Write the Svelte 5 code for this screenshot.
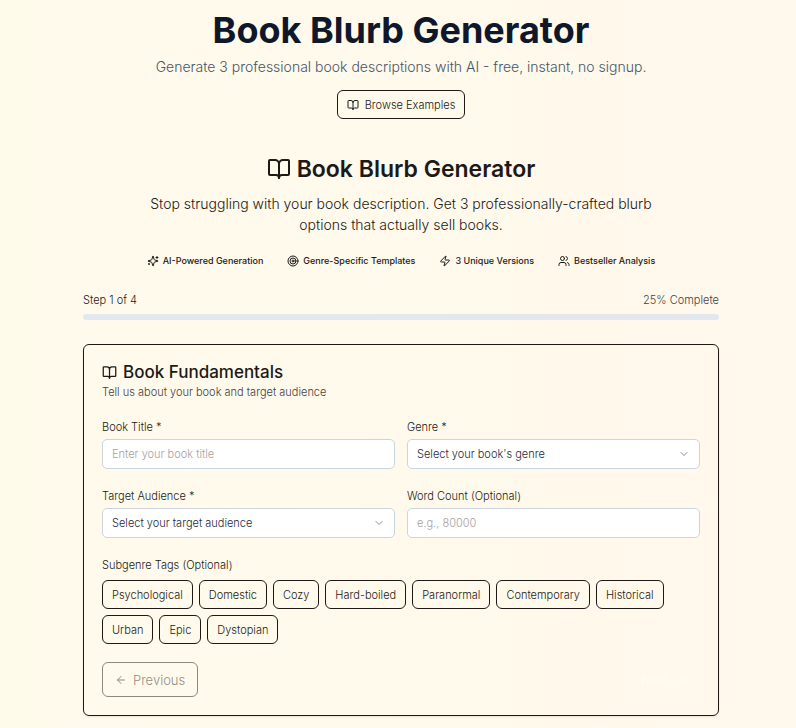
<script lang="ts">
    const features = [
        { icon: 'sparkles', label: 'AI-Powered Generation' },
        { icon: 'target', label: 'Genre-Specific Templates' },
        { icon: 'zap', label: '3 Unique Versions' },
        { icon: 'users', label: 'Bestseller Analysis' },
    ];

    const genres = ['Fantasy', 'Mystery', 'Romance', 'Science Fiction', 'Thriller'];
    const audiences = ['Middle Grade', 'Young Adult', 'New Adult', 'Adult'];
    const tags = [
        'Psychological',
        'Domestic',
        'Cozy',
        'Hard-boiled',
        'Paranormal',
        'Contemporary',
        'Historical',
        'Urban',
        'Epic',
        'Dystopian',
    ];

    let title = $state('');
    let genre = $state('');
    let audience = $state('');
    let wordCount = $state('');
    let selectedTags: string[] = $state([]);

    function toggleTag(tag: string) {
        selectedTags = selectedTags.includes(tag) ? selectedTags.filter((t) => t !== tag) : [...selectedTags, tag];
    }
</script>

{#snippet icon(name: string)}
    <svg class="icon icon-{name}" viewBox="0 0 24 24" aria-hidden="true">
        {#if name === 'book'}
            <path d="M12 7v14" />
            <path
                d="M3 18a1 1 0 0 1-1-1V4a1 1 0 0 1 1-1h5a4 4 0 0 1 4 4 4 4 0 0 1 4-4h5a1 1 0 0 1 1 1v13a1 1 0 0 1-1 1h-6a3 3 0 0 0-3 3 3 3 0 0 0-3-3z"
            />
        {:else if name === 'sparkles'}
            <path
                d="M9.937 15.5A2 2 0 0 0 8.5 14.063l-6.135-1.582a.5.5 0 0 1 0-.962L8.5 9.936A2 2 0 0 0 9.937 8.5l1.582-6.135a.5.5 0 0 1 .963 0L14.063 8.5A2 2 0 0 0 15.5 9.937l6.135 1.581a.5.5 0 0 1 0 .964L15.5 14.063a2 2 0 0 0-1.437 1.437l-1.582 6.135a.5.5 0 0 1-.963 0z"
            />
            <path d="M20 3v4M22 5h-4M4 17v2M5 18H3" />
        {:else if name === 'target'}
            <circle cx="12" cy="12" r="10" />
            <circle cx="12" cy="12" r="6" />
            <circle cx="12" cy="12" r="2" />
        {:else if name === 'zap'}
            <path
                d="M4 14a1 1 0 0 1-.78-1.63l9.9-10.2a.5.5 0 0 1 .86.46l-1.92 6.02A1 1 0 0 0 13 10h7a1 1 0 0 1 .78 1.63l-9.9 10.2a.5.5 0 0 1-.86-.46l1.92-6.02A1 1 0 0 0 11 14z"
            />
        {:else if name === 'users'}
            <path d="M16 21v-2a4 4 0 0 0-4-4H6a4 4 0 0 0-4 4v2" />
            <circle cx="9" cy="7" r="4" />
            <path d="M22 21v-2a4 4 0 0 0-3-3.87M16 3.13a4 4 0 0 1 0 7.75" />
        {:else if name === 'chevron'}
            <path d="m6 9 6 6 6-6" />
        {:else if name === 'left'}
            <path d="m12 19-7-7 7-7M19 12H5" />
        {:else if name === 'right'}
            <path d="M5 12h14M12 5l7 7-7 7" />
        {/if}
    </svg>
{/snippet}

<main class="page">
    <header class="hero">
        <h1>Book Blurb Generator</h1>
        <p>Generate 3 professional book descriptions with AI - free, instant, no signup.</p>
        <button type="button" class="button">{@render icon('book')}Browse Examples</button>
    </header>

    <section class="intro">
        <h2>{@render icon('book')}Book Blurb Generator</h2>
        <p>Stop struggling with your book description. Get 3 professionally-crafted blurb options that actually sell books.</p>
        <ul class="features">
            {#each features as feature}
                <li>{@render icon(feature.icon)}{feature.label}</li>
            {/each}
        </ul>
    </section>

    <section class="progress">
        <div class="progress-labels">
            <span>Step 1 of 4</span>
            <span class="progress-percent">25% Complete</span>
        </div>
        <div class="progress-track" role="progressbar" aria-label="Progress" aria-valuenow="25" aria-valuemin="0" aria-valuemax="100"></div>
    </section>

    <form class="card">
        <h3>{@render icon('book')}Book Fundamentals</h3>
        <p class="card-description">Tell us about your book and target audience</p>

        <div class="fields">
            <div class="field">
                <label for="title">Book Title *</label>
                <input id="title" type="text" placeholder="Enter your book title" bind:value={title} />
            </div>
            <div class="field">
                <label for="genre">Genre *</label>
                <div class="select">
                    <select id="genre" bind:value={genre}>
                        <option value="">Select your book's genre</option>
                        {#each genres as option}
                            <option value={option}>{option}</option>
                        {/each}
                    </select>
                    {@render icon('chevron')}
                </div>
            </div>
            <div class="field">
                <label for="audience">Target Audience *</label>
                <div class="select">
                    <select id="audience" bind:value={audience}>
                        <option value="">Select your target audience</option>
                        {#each audiences as option}
                            <option value={option}>{option}</option>
                        {/each}
                    </select>
                    {@render icon('chevron')}
                </div>
            </div>
            <div class="field">
                <label for="word-count">Word Count (Optional)</label>
                <input id="word-count" type="text" inputmode="numeric" placeholder="e.g., 80000" bind:value={wordCount} />
            </div>
        </div>

        <fieldset class="tags-group">
            <legend>Subgenre Tags (Optional)</legend>
            <div class="tags">
                {#each tags as tag}
                    <button
                        type="button"
                        class="button"
                        class:active={selectedTags.includes(tag)}
                        aria-pressed={selectedTags.includes(tag)}
                        onclick={() => toggleTag(tag)}>{tag}</button
                    >
                {/each}
            </div>
        </fieldset>

        <div class="actions">
            <button type="button" class="button large" disabled>{@render icon('left')}Previous</button>
            <button type="button" class="button large next">Next{@render icon('right')}</button>
        </div>
    </form>
</main>

<style>
    :global(body) {
        margin: 0;
        background: linear-gradient(to right, #fffbeb, #fff8ec);
    }

    .page {
        box-sizing: border-box;
        min-height: 100vh;
        padding: 8px 77px 12px 83px;
        color: #1c1917;
        font-family: Inter, 'Liberation Sans', sans-serif;
        font-size: 11px;
        font-weight: 300;
        line-height: 16px;
    }

    h1,
    h2,
    h3,
    p {
        margin: 0;
    }

    .icon {
        flex: none;
        width: 12px;
        height: 12px;
        fill: none;
        stroke: currentColor;
        stroke-width: 2;
        stroke-linecap: round;
        stroke-linejoin: round;
    }

    .hero {
        display: flex;
        flex-direction: column;
        align-items: center;
        text-align: center;
    }

    .hero h1 {
        color: #0f172a;
        font-size: 36px;
        font-weight: 700;
        line-height: 45px;
    }

    .hero p {
        margin: 3px 0 13px;
        color: #475569;
        font-size: 14px;
        line-height: 21px;
    }

    .button {
        display: inline-flex;
        align-items: center;
        justify-content: center;
        gap: 6px;
        box-sizing: border-box;
        height: 29px;
        padding: 0 9px;
        border: 1px solid #1c1917;
        border-radius: 6px;
        background: transparent;
        color: #1c1917;
        font: inherit;
        cursor: pointer;
    }

    .button.active {
        background: #1c1917;
        color: #fffbeb;
    }

    .button:disabled {
        opacity: 0.5;
        cursor: default;
    }

    .intro {
        display: flex;
        flex-direction: column;
        align-items: center;
        margin-top: 36px;
        text-align: center;
    }

    .intro h2 {
        display: flex;
        align-items: center;
        gap: 6px;
        font-size: 23px;
        font-weight: 600;
        line-height: 28px;
    }

    .intro h2 .icon {
        width: 24px;
        height: 24px;
    }

    .intro p {
        max-width: 520px;
        margin-top: 10px;
        font-size: 14px;
        line-height: 21px;
    }

    .features {
        display: flex;
        flex-wrap: wrap;
        justify-content: center;
        gap: 24px;
        margin: 18px 0 0;
        padding: 0;
        list-style: none;
        font-size: 9px;
        font-weight: 500;
    }

    .features li {
        display: flex;
        align-items: center;
        gap: 4px;
    }

    .progress {
        margin-top: 23px;
    }

    .progress-labels {
        display: flex;
        justify-content: space-between;
    }

    .progress-percent {
        color: #44403c;
    }

    .progress-track {
        height: 6px;
        margin-top: 6px;
        border-radius: 3px;
        background: #e2e8f0;
    }

    .card {
        margin-top: 24px;
        padding: 18px;
        border: 1px solid #1c1917;
        border-radius: 6px;
        box-shadow: 0 1px 2px rgba(0, 0, 0, 0.1);
    }

    .card h3 {
        display: flex;
        align-items: center;
        gap: 6px;
        font-size: 17px;
        font-weight: 500;
        line-height: 18px;
    }

    .card h3 .icon {
        width: 15px;
        height: 15px;
    }

    .card-description {
        margin-top: 3px;
        color: #44403c;
    }

    .fields {
        display: grid;
        grid-template-columns: repeat(2, minmax(0, 1fr));
        gap: 19px 12px;
        margin-top: 19px;
    }

    .field label,
    .tags-group legend {
        display: block;
        padding: 0;
        line-height: 17px;
    }

    .field input,
    .select {
        margin-top: 3px;
    }

    .field input,
    .field select {
        box-sizing: border-box;
        display: block;
        width: 100%;
        height: 30px;
        padding: 0 9px;
        border: 1px solid #cbd5e1;
        border-radius: 5px;
        background: #fff;
        color: #1c1917;
        font: inherit;
    }

    .field select {
        color: #1e293b;
        appearance: none;
    }

    .field input::placeholder {
        color: #a8a29e;
    }

    .select {
        position: relative;
    }

    .select .icon {
        position: absolute;
        top: 9px;
        right: 10px;
        opacity: 0.5;
        pointer-events: none;
    }

    .tags-group {
        margin: 19px 0 0;
        padding: 0;
        border: 0;
    }

    .tags {
        display: flex;
        flex-wrap: wrap;
        gap: 6px;
        margin-top: 6px;
    }

    .actions {
        display: flex;
        justify-content: space-between;
        margin-top: 18px;
    }

    .button.large {
        height: 35px;
        gap: 6px;
        padding: 0 12px;
        font-size: 13px;
    }

    .button.next {
        border-color: transparent;
        color: #fffdf5;
    }
</style>
